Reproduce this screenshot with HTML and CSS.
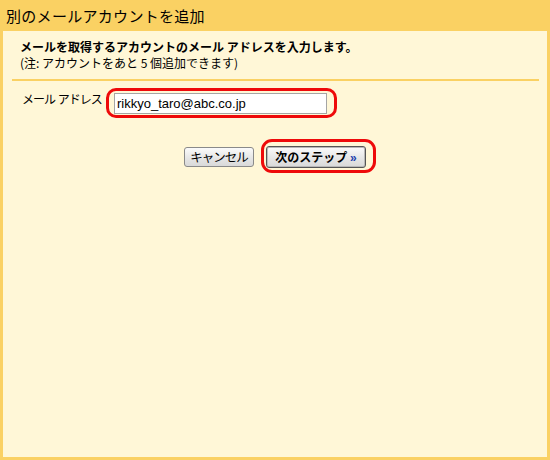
FILE: index.html
```html
<!DOCTYPE html>
<html lang="ja">
<head>
<meta charset="utf-8">
<title>別のメールアカウントを追加</title>
<link rel="stylesheet" href="styles.css">
</head>
<body>
<div class="frame">
  <div class="header">別のメールアカウントを追加</div>
  <div class="panel">
    <div class="intro">
      <div class="lead">メールを取得するアカウントのメール アドレスを入力します。</div>
      <div class="note">(注: アカウントをあと 5 個追加できます)</div>
    </div>
    <div class="divider"></div>
    <div class="form-row">
      <label class="label" for="email">メール アドレス</label>
      <span class="mark mark-input">
        <input class="input" id="email" type="text" value="rikkyo_taro@abc.co.jp">
      </span>
    </div>
    <div class="actions">
      <button class="btn btn-cancel" type="button">キャンセル</button>
      <span class="mark mark-next">
        <button class="btn btn-next" type="button">次のステップ <span class="raquo">»</span></button>
      </span>
    </div>
  </div>
</div>
</body>
</html>
```
FILE: styles.css
```css
html, body {
  margin: 0;
  padding: 0;
}
body {
  width: 550px;
  height: 460px;
  background: #fad163;
  font-family: "Noto Sans CJK JP", "Liberation Sans", sans-serif;
  color: #000;
  overflow: hidden;
}
.frame {
  display: flex;
  flex-direction: column;
  height: 460px;
}
.header {
  height: 31px;
  line-height: 31px;
  padding-left: 6px;
  font-size: 15px;
  letter-spacing: 0.3px;
  color: #000;
}
.panel {
  flex: 1;
  margin: 0 3px 3px 3px;
  background: #fff7d7;
  padding-top: 8px;
}
.intro {
  padding-left: 17px;
  font-size: 12px;
  line-height: 16px;
}
.lead {
  font-weight: bold;
}
.divider {
  height: 2px;
  background: #fad163;
  margin: 8px 8px 0 9px;
}
.form-row {
  display: flex;
  align-items: flex-start;
  margin-top: 12px;
  padding-left: 19px;
}
.label {
  width: 92px;
  font-size: 12px;
  line-height: 16px;
  letter-spacing: -1px;
  word-spacing: 1px;
  margin-top: -2px;
  white-space: nowrap;
}
.mark {
  position: relative;
  display: inline-flex;
}
.mark::after {
  content: "";
  position: absolute;
  border: 3px solid #ee0a0a;
  box-sizing: border-box;
  pointer-events: none;
}
.mark-input::after {
  top: -5px;
  bottom: -4px;
  left: -8px;
  right: -10px;
  border-radius: 10px;
}
.mark-next::after {
  top: -7px;
  bottom: -5px;
  left: -5px;
  right: -10px;
  border-radius: 11px;
}
.input {
  box-sizing: border-box;
  width: 213px;
  height: 21px;
  margin: 0;
  padding: 0 2px;
  border: 1px solid #a5a5a5;
  background: #fff;
  font-family: "Liberation Sans", Arial, sans-serif;
  font-size: 13px;
  color: #000;
  outline: none;
}
.actions {
  display: flex;
  justify-content: center;
  align-items: center;
  gap: 12px;
  margin-top: 32px;
}
.btn {
  box-sizing: border-box;
  margin: 0;
  padding: 0;
  font-family: "Noto Sans CJK JP", "Liberation Sans", sans-serif;
  font-size: 12px;
  line-height: 16px;
  color: #000;
  background: linear-gradient(#fbfbfb, #e6e6e6 55%, #d9d9d9);
  border: 1px solid #8a8a8a;
  border-radius: 3px;
  text-align: center;
}
.btn-cancel {
  width: 70px;
  height: 20px;
  letter-spacing: -1px;
  font-size: 12.5px;
}
.btn-next {
  width: 100px;
  height: 22px;
  font-weight: bold;
  border: 1px solid #555;
  box-shadow: inset 0 0 0 1px #b8b8b8;
}
.raquo {
  color: #1d3fae;
  font-family: "Liberation Sans", Arial, sans-serif;
  font-weight: bold;
}
```
